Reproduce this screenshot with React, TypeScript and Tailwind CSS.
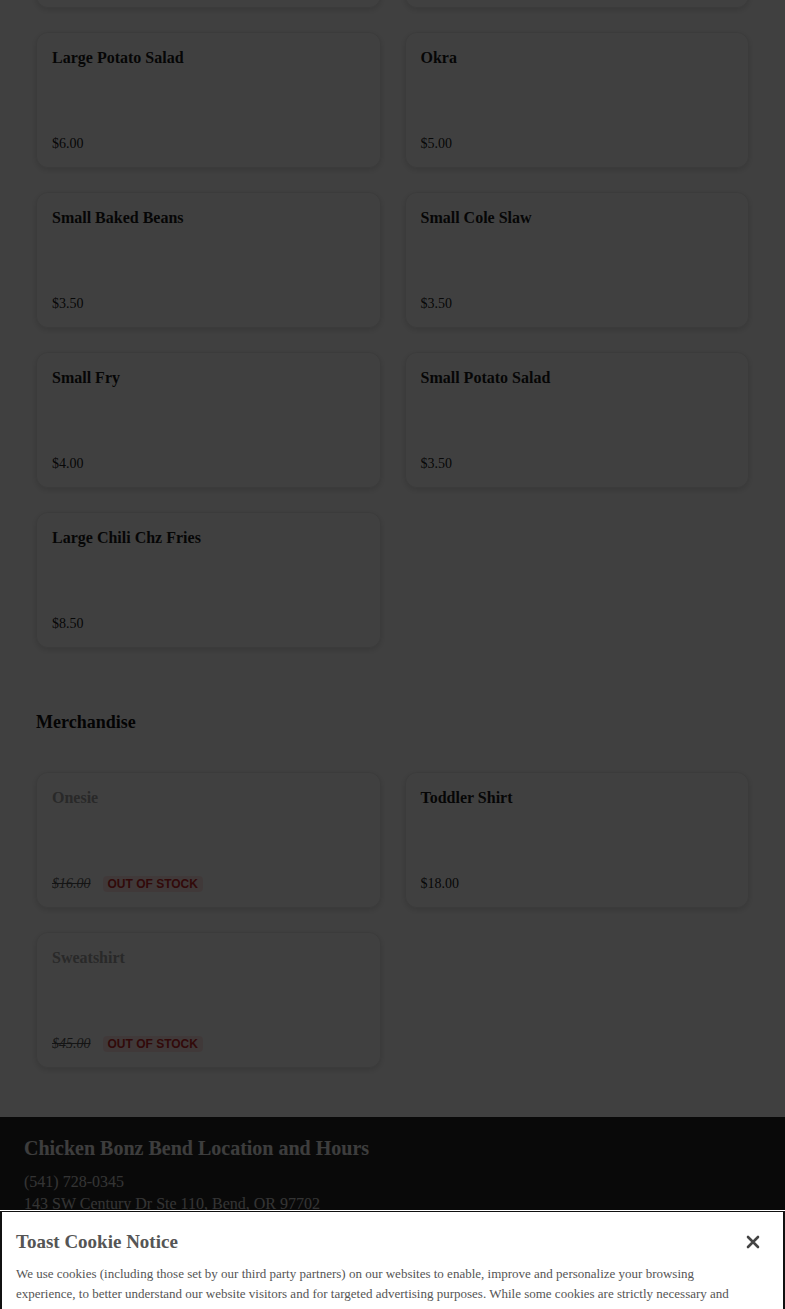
import React from 'react';

type Item = { name: string; price: string; soldOut?: boolean };

const sides: Item[] = [
  { name: 'Large Fry', price: '$6.00' },
  { name: 'Large Mac', price: '$6.00' },
  { name: 'Large Potato Salad', price: '$6.00' },
  { name: 'Okra', price: '$5.00' },
  { name: 'Small Baked Beans', price: '$3.50' },
  { name: 'Small Cole Slaw', price: '$3.50' },
  { name: 'Small Fry', price: '$4.00' },
  { name: 'Small Potato Salad', price: '$3.50' },
  { name: 'Large Chili Chz Fries', price: '$8.50' },
];

const merch: Item[] = [
  { name: 'Onesie', price: '$16.00', soldOut: true },
  { name: 'Toddler Shirt', price: '$18.00' },
  { name: 'Sweatshirt', price: '$45.00', soldOut: true },
];

const Card: React.FC<{ item: Item }> = ({ item }) => (
  <div className="h-[136px] rounded-xl bg-white border border-[#ececec] shadow-[0_2px_6px_rgba(0,0,0,0.14)] px-[15px] pt-[15px] pb-[13px] flex flex-col justify-between">
    <div className={`text-[16px] leading-5 font-bold ${item.soldOut ? 'text-[#a3a3a3]' : 'text-[#1a1a1a]'}`}>
      {item.name}
    </div>
    {item.soldOut ? (
      <div className="flex items-center gap-3 h-5">
        <span className="text-[14px] leading-5 italic line-through text-[#555]">{item.price}</span>
        <span className="font-['Liberation_Sans',Arial,sans-serif] font-bold text-[12px] leading-4 text-[#c62828] bg-[#fde4e4] rounded px-[5px]">
          OUT OF STOCK
        </span>
      </div>
    ) : (
      <div className="text-[14px] leading-5 text-[#222]">{item.price}</div>
    )}
  </div>
);

export default function App() {
  return (
    <div className="relative h-[1309px] overflow-hidden bg-white font-['Liberation_Serif','Times_New_Roman',serif]">
      <div className="px-9 -mt-[128px]">
        <div className="grid grid-cols-2 gap-6">
          {sides.map((s) => (
            <Card key={s.name} item={s} />
          ))}
        </div>

        <h2 className="mt-[62px] text-[18px] leading-6 font-bold text-[#111]">Merchandise</h2>

        <div className="mt-[38px] grid grid-cols-2 gap-6">
          {merch.map((s) => (
            <Card key={s.name} item={s} />
          ))}
        </div>
      </div>

      <footer className="mt-[49px] bg-[#262626] px-6 pt-[19px] pb-10">
        <h3 className="text-[20px] leading-6 font-bold text-[#f2f2f2]">Chicken Bonz Bend Location and Hours</h3>
        <div className="mt-[11px] text-[16px] leading-[22px] text-[#d0d0d0]">(541) 728-0345</div>
        <a className="block text-[16px] leading-[21px] text-[#d0d0d0] underline">143 SW Century Dr Ste 110, Bend, OR 97702</a>
        <div className="mt-4 text-[16px] leading-[22px] text-[#d0d0d0]">Monday - Sunday</div>
      </footer>

      <div className="fixed inset-0 bg-black/75"></div>

      <div className="fixed left-0 right-0 top-[1210px] border-t border-white">
        <div className="bg-white border-l-2 border-r-2 border-t border-[#111] pl-[14px] pr-4 pt-[18px] pb-6">
          <div className="flex items-center justify-between">
            <h2 className="text-[19px] leading-6 font-bold text-[#555]">Toast Cookie Notice</h2>
            <button className="mr-[7px] text-[#444]">
              <svg width="14" height="14" viewBox="0 0 14 14" fill="none" stroke="currentColor" strokeWidth="2.6" strokeLinecap="round">
                <path d="M2 2L12 12M12 2L2 12" />
              </svg>
            </button>
          </div>
          <p className="mt-[10px] text-[13px] leading-5 text-[#555] pr-6">
            We use cookies (including those set by our third party partners) on our websites to enable, improve and personalize your browsing experience, to better understand our website visitors and for targeted advertising purposes. While some cookies are strictly necessary and
            cannot be disabled, you can manage your preferences for other cookies at any time.
          </p>
        </div>
      </div>
    </div>
  );
}
